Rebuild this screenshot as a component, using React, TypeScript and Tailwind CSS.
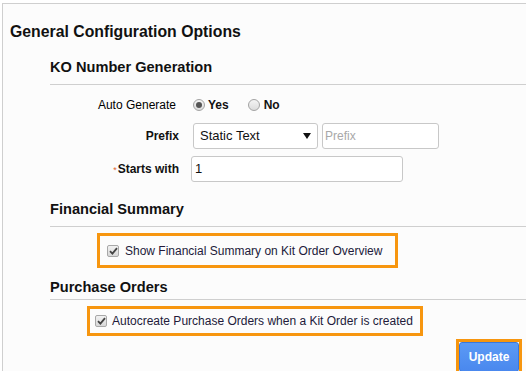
import React from "react";

function Radio({ checked }: { checked: boolean }) {
  return (
    <span className="relative inline-flex h-[12px] w-[12px] items-center justify-center rounded-full border border-[#a3a3a3] bg-gradient-to-b from-[#f4f4f4] to-[#dcdcdc]">
      {checked && <span className="h-[6px] w-[6px] rounded-full bg-[#555]" />}
    </span>
  );
}

function Check() {
  return (
    <span className="inline-flex h-[12px] w-[12px] shrink-0 items-center justify-center rounded-[2px] border border-[#a8a8a8] bg-gradient-to-b from-[#f2f2f2] to-[#d8d8d8]">
      <svg width="9" height="8" viewBox="0 0 9 8">
        <path d="M1 4.2 L3.4 6.6 L8 1.2" fill="none" stroke="#444" strokeWidth="1.8" />
      </svg>
    </span>
  );
}

export default function App() {
  return (
    <div
      className="h-[371px] w-[526px] overflow-hidden bg-white text-[#111]"
      style={{ fontFamily: '"Liberation Sans", Arial, sans-serif' }}
    >
      <div className="ml-[2px] mt-[3px] h-[368px] border-l border-t border-[#cfcfcf] bg-[#fcfcfc]">
        <div className="mt-[18px] pl-[7px] text-[15.8px] font-bold leading-[20px]">
          General Configuration Options
        </div>

        <div className="ml-[47px]">
          <div className="mt-[16px] border-b border-[#cfcfcf] pb-[8px] text-[14.6px] font-bold leading-[18px]">
            KO Number Generation
          </div>

          <div className="mt-[9px] flex h-[22px] items-center">
            <div className="w-[126px] text-right text-[12px] text-[#000]">Auto Generate</div>
            <div className="ml-[17px] flex items-center text-[12px] font-bold">
              <Radio checked />
              <span className="ml-[3px]">Yes</span>
              <span className="ml-[19px] flex items-center">
                <Radio checked={false} />
              </span>
              <span className="ml-[4px]">No</span>
            </div>
          </div>

          <div className="mt-[7px] flex h-[26px] items-center">
            <div className="w-[129px] text-right text-[12px] font-bold">Prefix</div>
            <div className="ml-[14px] flex items-center">
              <div className="flex h-[26px] w-[125px] items-center justify-between rounded-[3px] border border-[#c8c8c8] bg-white pl-[6px] pr-[6px] text-[13px]">
                <span>Static Text</span>
                <svg width="8" height="6" viewBox="0 0 8 6">
                  <polygon points="0,0 8,0 4,6" fill="#111" />
                </svg>
              </div>
              <div className="ml-[4px] flex h-[26px] w-[117px] items-center rounded-[3px] border border-[#c8c8c8] bg-white pl-[2px] text-[12px] text-[#a8a8a8]">
                Prefix
              </div>
            </div>
          </div>

          <div className="mt-[7px] flex h-[26px] items-center">
            <div className="w-[129px] text-right text-[12px] font-bold">
              <span className="mr-[1px] text-[9px] font-normal text-[#e0642c]">*</span>
              Starts with
            </div>
            <div className="ml-[12px] flex h-[26px] w-[212px] items-center rounded-[3px] border border-[#c8c8c8] bg-white pl-[3px] text-[13px]">
              1
            </div>
          </div>

          <div className="mt-[18px] border-b border-[#cfcfcf] pb-[8px] text-[14.6px] font-bold leading-[18px]">
            Financial Summary
          </div>

          <div className="ml-[47px] mt-[6px] flex h-[35px] w-[301px] items-center border-[3px] border-[#f7960f] pl-[7px] text-[12px] text-[#221a3a]">
            <Check />
            <span className="ml-[6px]">Show Financial Summary on Kit Order Overview</span>
          </div>

          <div className="mt-[10px] border-b border-[#cfcfcf] pb-[3px] text-[14.6px] font-bold leading-[18px]">
            Purchase Orders
          </div>

          <div className="ml-[37px] mt-[6px] flex h-[30px] w-[336px] items-center border-[3px] border-[#f7960f] pl-[5px] text-[12px] text-[#221a3a]">
            <Check />
            <span className="ml-[5px]">Autocreate Purchase Orders when a Kit Order is created</span>
          </div>

          <div className="mt-[3px] flex justify-end pr-[4px]">
            <div className="h-[36px] w-[66px] border-[3px] border-[#f7960f] bg-[#fcfcfc]">
              <div className="flex h-[30px] w-[60px] items-center justify-center rounded-[3px] border border-[#3a78dc] bg-gradient-to-b from-[#5b9af5] to-[#4a88ee] text-[12px] font-bold text-white">
                Update
              </div>
            </div>
          </div>
        </div>
      </div>
    </div>
  );
}
